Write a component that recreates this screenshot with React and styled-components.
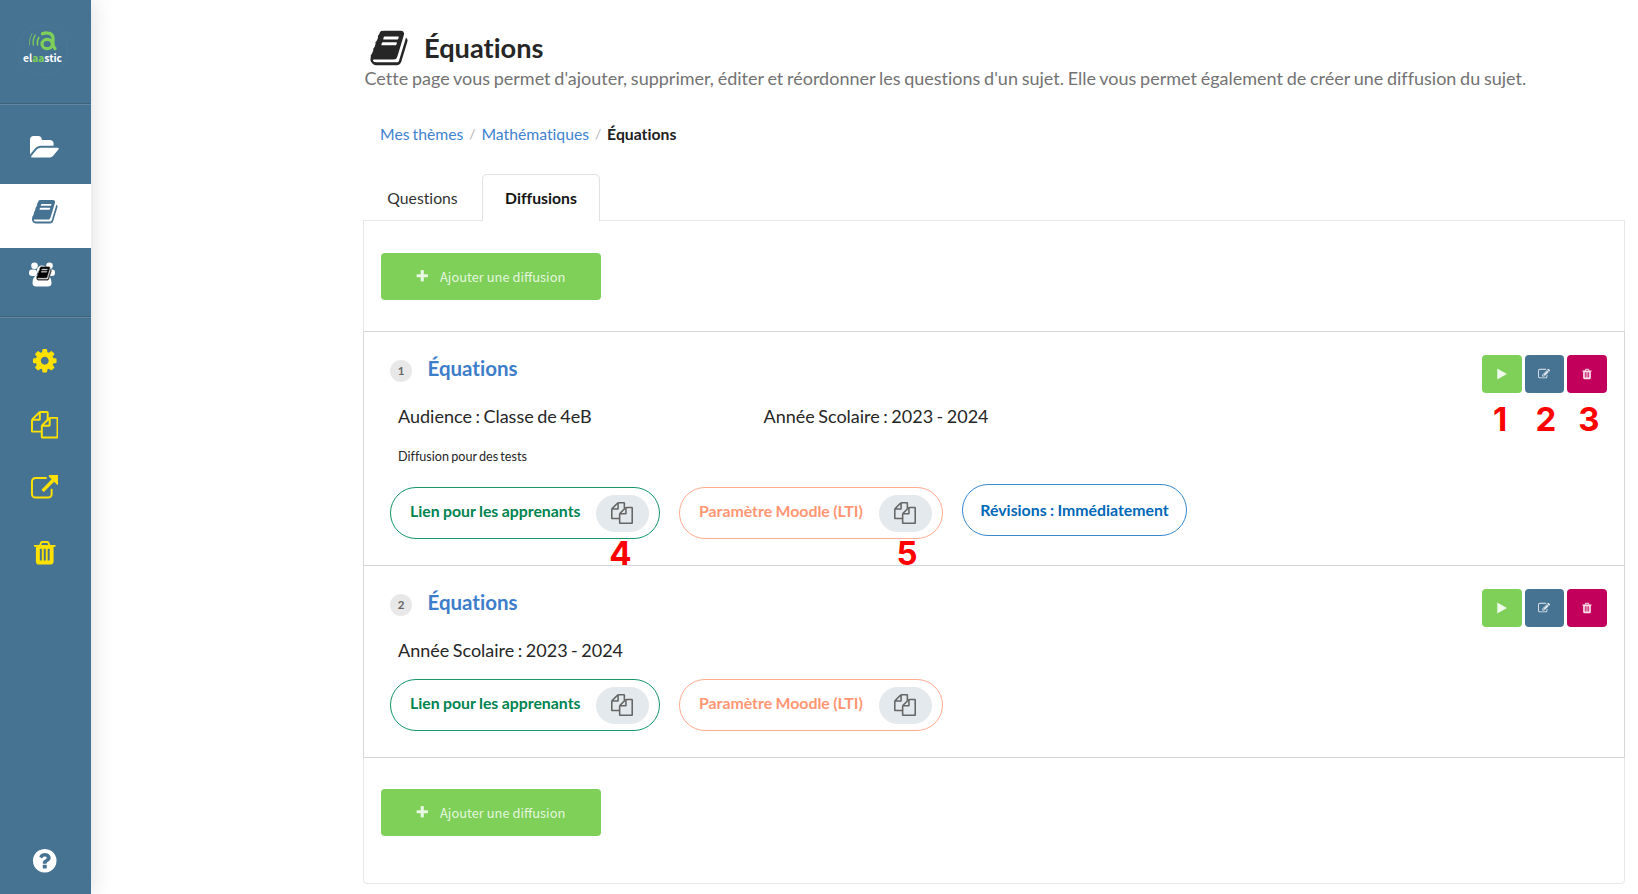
import React from "react";
import styled, { createGlobalStyle } from "styled-components";

const GlobalStyle = createGlobalStyle`
  *, *::before, *::after { box-sizing: border-box; }
  html, body { margin: 0; height: 100%; background: #fff; }
  body {
    font-family: Lato, "Liberation Sans", sans-serif;
    font-size: 16px;
    font-variant-ligatures: none;
    color: #262626;
    overflow: hidden;
  }
  h1, h2, p { margin: 0; }
`;

const paths = {
  book: "M1703 478q40 57 18 129l-275 906q-19 64-76.5 107.5t-122.5 43.5h-923q-77 0-148.5-53.5t-99.5-131.5q-24-67-2-127 0-4 3-27t4-37q1-8-3-21.5t-3-19.5q2-11 8-21t16.5-23.5 16.5-23.5q23-38 45-91.5t30-91.5q3-10 .5-30t-.5-28q3-11 17-28t17-23q21-36 42-92t25-90q1-9-2.5-32t.5-28q4-13 22-30.5t22-22.5q19-26 42.5-84.5t27.5-96.5q1-8-3-25.5t-2-26.5q2-8 9-18t18-23 17-21q8-12 16.5-30.5t15-35 16-36 19.5-32 26.5-23.5 36-11.5 47.5 5.5l-1 3q38-9 51-9h761q74 0 114 56t18 130l-274 906q-36 119-71.5 153.5t-128.5 34.5h-869q-27 0-38 15-11 16-1 43 24 70 144 70h923q29 0 56-15.5t35-41.5l300-987q7-22 5-57 38 15 59 43zm-1064 2q-4 13 2 22.5t20 9.5h608q13 0 25.5-9.5t16.5-22.5l21-64q4-13-2-22.5t-20-9.5h-608q-13 0-25.5 9.5t-16.5 22.5zm-83 256q-4 13 2 22.5t20 9.5h608q13 0 25.5-9.5t16.5-22.5l21-64q4-13-2-22.5t-20-9.5h-608q-13 0-25.5 9.5t-16.5 22.5z",
  cog: "M1152 896q0-106-75-181t-181-75-181 75-75 181 75 181 181 75 181-75 75-181zm512-109v222q0 12-8 23t-20 13l-185 28q-19 54-39 91 35 50 107 138 10 12 10 25t-9 23q-27 37-99 108t-94 71q-12 0-26-9l-138-108q-44 23-91 38-16 136-29 186-7 28-36 28h-222q-14 0-24.5-8.5t-11.5-21.5l-28-184q-49-16-90-37l-141 107q-10 9-25 9-14 0-25-11-126-114-165-168-7-10-7-23 0-12 8-23 15-21 51-66.5t54-70.5q-27-50-41-99l-183-27q-13-2-21-12.5t-8-23.5v-222q0-12 8-23t19-13l186-28q14-46 39-92-40-57-107-138-10-12-10-24 0-10 9-23 26-36 98.5-107.5t94.5-71.5q13 0 26 10l138 107q44-23 91-38 16-136 29-186 7-28 36-28h222q14 0 24.5 8.5t11.5 21.5l28 184q49 16 90 37l142-107q9-9 24-9 13 0 25 10 129 119 165 170 7 8 7 22 0 12-8 23-15 21-51 66.5t-54 70.5q26 50 41 98l183 28q13 2 21 12.5t8 23.5z",
  copy: "M1696 384q40 0 68 28t28 68v1216q0 40-28 68t-68 28h-960q-40 0-68-28t-28-68v-288h-544q-40 0-68-28t-28-68v-672q0-40 20-88t48-76l408-408q28-28 76-48t88-20h416q40 0 68 28t28 68v328q68-40 128-40h416zm-544 213l-299 299h299v-299zm-640-384l-299 299h299v-299zm196 647l316-316v-416h-384v416q0 40-28 68t-68 28h-416v640h512v-256q0-40 20-88t48-76zm956 804v-1152h-384v416q0 40-28 68t-68 28h-416v640h896z",
  external: "M1408 928v320q0 119-84.5 203.5t-203.5 84.5h-832q-119 0-203.5-84.5t-84.5-203.5v-832q0-119 84.5-203.5t203.5-84.5h704q14 0 23 9t9 23v64q0 14-9 23t-23 9h-704q-66 0-113 47t-47 113v832q0 66 47 113t113 47h832q66 0 113-47t47-113v-320q0-14 9-23t23-9h64q14 0 23 9t9 23zm384-864v512q0 26-19 45t-45 19-45-19l-176-176-652 652q-10 10-23 10t-23-10l-114-114q-10-10-10-23t10-23l652-652-176-176q-19-19-19-45t19-45 45-19h512q26 0 45 19t19 45z",
  trash: "M704 1376v-704q0-14-9-23t-23-9h-64q-14 0-23 9t-9 23v704q0 14 9 23t23 9h64q14 0 23-9t9-23zm256 0v-704q0-14-9-23t-23-9h-64q-14 0-23 9t-9 23v704q0 14 9 23t23 9h64q14 0 23-9t9-23zm256 0v-704q0-14-9-23t-23-9h-64q-14 0-23 9t-9 23v704q0 14 9 23t23 9h64q14 0 23-9t9-23zm-544-992h448l-48-117q-7-9-17-11h-317q-10 2-17 11zm928 32v64q0 14-9 23t-23 9h-96v948q0 83-47 143.500t-113 60.500h-832q-66 0-113-58.500t-47-141.500v-952h-96q-14 0-23-9t-9-23v-64q0-14 9-23t23-9h309l70-167q15-37 54-63t79-26h320q40 0 79 26t54 63l70 167h309q14 0 23 9t9 23z",
  edit: "M888 1184l116-116-152-152-116 116v56h96v96h56zm440-720q-16-16-33 1l-350 350q-17 17-1 33t33-1l350-350q17-17 1-33zm80 594v190q0 119-84.5 203.5t-203.5 84.5h-832q-119 0-203.5-84.5t-84.5-203.5v-832q0-119 84.5-203.5t203.5-84.5h832q63 0 117 25 15 7 18 23 3 17-9 29l-49 49q-14 14-32 8-23-6-45-6h-832q-66 0-113 47t-47 113v832q0 66 47 113t113 47h832q66 0 113-47t47-113v-126q0-13 9-22l64-64q15-15 35-7t20 29zm-96-738l288 288-672 672h-288v-288zm444 132l-92 92-288-288 92-92q28-28 68-28t68 28l152 152q28 28 28 68t-28 68z",
  folder: "M1879 952q0 31-31 66l-336 396q-43 51-120.5 86.5t-143.5 35.5h-1088q-34 0-60.5-13t-26.5-43q0-31 31-66l336-396q43-51 120.5-86.5t143.5-35.5h1088q34 0 60.5 13t26.5 43zm-343-344v160h-832q-94 0-197 47.5t-164 119.5l-337 396-5 6q0-4-.5-12.5t-.5-12.5v-960q0-92 66-158t158-66h320q92 0 158 66t66 158v32h544q92 0 158 66t66 158z",
  help: "M1024 1376v-192q0-14-9-23t-23-9h-192q-14 0-23 9t-9 23v192q0 14 9 23t23 9h192q14 0 23-9t9-23zm256-672q0-88-55.5-163t-138.5-116-170-41q-243 0-371 213-15 24 8 42l132 100q7 6 19 6 16 0 25-12 53-68 86-92 34-24 86-24 48 0 85.5 26t37.5 59q0 38-20 61t-68 45q-63 28-115.5 86.5t-52.5 125.5v36q0 14 9 23t23 9h192q14 0 23-9t9-23q0-19 21.5-49.5t54.5-49.5q32-18 49-28.5t46-35 44.5-48 28-60.5 12.5-81zm384 192q0 209-103 385.5t-279.5 279.5-385.5 103-385.5-103-279.5-279.5-103-385.5 103-385.5 279.5-279.5 385.5-103 385.5 103 279.5 279.5 103 385.5z",
  plus: "M1600 736v192q0 40-28 68t-68 28h-416v416q0 40-28 68t-68 28h-192q-40 0-68-28t-28-68v-416h-416q-40 0-68-28t-28-68v-192q0-40 28-68t68-28h416v-416q0-40 28-68t68-28h192q40 0 68 28t28 68v416h416q40 0 68 28t28 68z",
  play: "M1576 927l-1328 738q-23 13-39.5 3t-16.5-36v-1472q0-26 16.5-36t39.5 3l1328 738q23 13 23 31t-23 31z",
};

const Svg = styled.svg`
  display: block;
  flex: none;
  height: ${(p) => p.$size}px;
  width: ${(p) => (p.$size * p.$w) / 1792}px;
  fill: currentColor;
`;

function Icon({ name, size, w = 1792 }) {
  return (
    <Svg $size={size} $w={w} viewBox={`0 0 ${w} 1792`} aria-hidden="true">
      <path d={paths[name]} />
    </Svg>
  );
}

const Page = styled.div`
  display: flex;
  height: 894px;
`;

const Sidebar = styled.nav`
  display: flex;
  flex-direction: column;
  flex: none;
  width: 91px;
  background: #467392;
  box-shadow: 0 0 21px rgba(34, 36, 38, 0.17);
`;

const LogoBox = styled.div`
  height: 103px;
  padding: 24px 0 0 17px;
`;

const SideGroup = styled.div`
  padding-top: ${(p) => p.$top}px;
  height: ${(p) => p.$height}px;
  border-top: 1px solid rgba(34, 36, 38, 0.2);
  box-shadow: inset 0 1px 0 rgba(255, 255, 255, 0.14);
`;

const SideItem = styled.a`
  display: flex;
  align-items: center;
  justify-content: center;
  height: 64px;
  padding: 0 2px 8px 0;
  color: ${(p) => (p.$active ? "#467392" : p.$color || "#fff")};
  background: ${(p) => (p.$active ? "#fff" : "transparent")};
`;

const HelpItem = styled(SideItem)`
  margin-top: auto;
  padding-bottom: 2px;
`;

const GroupSvg = styled.svg`
  display: block;
  width: 27px;
  height: 25px;
  margin: -4px 4px 0 0;
`;

const Main = styled.main`
  width: 1262px;
  margin-left: 272px;
  padding-top: 27px;
`;

const PageTitle = styled.h1`
  display: flex;
  align-items: center;
  gap: 15px;
  height: 41px;
  padding-left: 6px;
  font-size: 27.2px;
  font-weight: 700;
  line-height: 41px;
`;

const Subtitle = styled.p`
  height: 23px;
  padding-left: 1.5px;
  font-size: 18px;
  line-height: 21px;
  word-spacing: -0.88px;
  color: #737373;
  white-space: nowrap;
`;

const Breadcrumb = styled.div`
  display: flex;
  height: 83px;
  padding: 31px 0 0 17px;
  font-size: 15.75px;
  line-height: 23px;
  word-spacing: -1px;
  color: #212121;

  a { color: #4183d0; }
  i { width: 18px; text-align: center; font-style: normal; color: #b5b5b5; font-size: 14px; }
`;

const Tabs = styled.div`
  display: flex;
  height: 47px;
  margin-bottom: -1px;
`;

const Tab = styled.a`
  display: flex;
  align-items: center;
  justify-content: center;
  width: ${(p) => p.$width}px;
  padding-bottom: 1px;
  font-size: 15.75px;
  font-weight: ${(p) => (p.$active ? 700 : 400)};
  color: ${(p) => (p.$active ? "#141414" : "#333")};
  border: 1px solid ${(p) => (p.$active ? "#e0e1e2" : "transparent")};
  border-bottom: 0;
  border-radius: 5px 5px 0 0;
  background: ${(p) => (p.$active ? "#fff" : "transparent")};
  z-index: 1;
`;

const Panel = styled.section`
  height: 664px;
  border: 1px solid #e6e7e8;
  border-radius: 0 0 4px 4px;
`;

const AddBar = styled.div`
  height: ${(p) => p.$height}px;
  padding: ${(p) => p.$top}px 0 0 16.5px;
`;

const AddButton = styled.button`
  display: flex;
  align-items: center;
  gap: 11px;
  width: 220px;
  height: 47px;
  padding: 0 0 0 34px;
  border: 0;
  border-radius: 4px;
  background: #7ed058;
  color: rgba(255, 255, 255, 0.82);
  font: 400 12.9px/20px "Noto Sans CJK SC", "Open Sans", sans-serif;
`;

const Row = styled.article`
  display: flex;
  justify-content: space-between;
  height: ${(p) => p.$height}px;
  margin: 0 -1px;
  padding: 22px 17px 0 26px;
  border: 1px solid #d6d7d8;
  border-bottom-width: ${(p) => (p.$last ? 1 : 0)}px;
`;

const RowHead = styled.div`
  display: flex;
  align-items: center;
  gap: 15.5px;
  height: 34px;
`;

const Rank = styled.span`
  display: flex;
  align-items: center;
  justify-content: center;
  width: 22px;
  height: 22px;
  margin-top: -1px;
  border-radius: 50%;
  background: #e8e8e8;
  color: #666;
  font-size: 11.5px;
  font-weight: 700;
`;

const RowTitle = styled.h2`
  font-size: 20.5px;
  line-height: 28px;
  margin-top: -6px;
  font-weight: 700;
  color: #3d7dca;
`;

const Info = styled.div`
  display: grid;
  grid-template-columns: 365.5px auto;
  height: 24px;
  margin-top: 16px;
  padding-left: 8px;
  font-size: 18px;
  line-height: 24px;
  word-spacing: -1.1px;
`;

const Note = styled.p`
  height: 20px;
  margin-top: 18px;
  padding-left: 8px;
  font-size: 12.6px;
  line-height: 21px;
  word-spacing: -1px;
`;

const Pills = styled.div`
  display: flex;
  gap: 19px;
  margin-top: ${(p) => p.$top}px;
`;

const Pill = styled.div`
  display: flex;
  align-items: center;
  justify-content: ${(p) => (p.$plain ? "center" : "space-between")};
  width: ${(p) => p.$width}px;
  height: 52px;
  margin-top: ${(p) => (p.$plain ? -3 : 0)}px;
  padding: 0 ${(p) => (p.$plain ? 0 : 10)}px 0 ${(p) => (p.$plain ? 0 : 19)}px;
  border: 1px solid ${(p) => p.$border};
  border-radius: 27px;
  color: ${(p) => p.$color};
  font-size: 15.85px;
  font-weight: 700;
  line-height: 20px;
  word-spacing: -0.5px;
  white-space: nowrap;

  & > span { margin-top: ${(p) => (p.$plain ? -1 : -5)}px; }
`;

const CopyButton = styled.button`
  display: flex;
  align-items: center;
  justify-content: center;
  width: 53px;
  height: 37px;
  padding: 0 2px 1px 0;
  border: 0;
  border-radius: 19px;
  background: #e3e9ec;
  color: #666;
`;

const Actions = styled.div`
  display: flex;
  gap: 3px;
  margin-top: 1px;
`;

const ActionButton = styled.button`
  display: flex;
  align-items: center;
  justify-content: center;
  width: 39.7px;
  height: 37.500px;
  padding: 0;
  border: 0;
  border-radius: 4px;
  background: ${(p) => p.$bg};
  color: rgba(255, 255, 255, 0.88);
`;

const Marker = styled.span`
  position: absolute;
  left: ${(p) => p.$x - 20}px;
  top: ${(p) => p.$y - 20}px;
  width: 40px;
  text-align: center;
  color: #f00;
  font: 700 33px/40px Inter, sans-serif;
  z-index: 2;
`;

const LogoText = styled.text`
  font-family: "Noto Sans CJK SC", "Open Sans", sans-serif;
  font-weight: 700;
`;

function Logo() {
  return (
    <svg width="52" height="52" viewBox="0 0 52 52" aria-label="elaastic">
      <circle cx="25.500" cy="26" r="25" fill="none" stroke="#4a7896" strokeWidth=".8" />
      <g fill="none" stroke="#7ed058" strokeLinecap="round">
        <path d="M15 9.500q-3.200 5-2.600 11.500" strokeWidth="1" opacity=".7" />
        <path d="M18.300 11q-2.800 4.500-2 10" strokeWidth="1.300" />
        <path d="M21.800 13.500q-2.200 3.500-1.300 7.500" strokeWidth="1.600" />
        <path d="M25.500 9.800q3-1.300 6-.6 4.500.8 4.500 5.300v4.500q0 3.500 2 5.500" strokeWidth="3.200" />
        <ellipse cx="30.200" cy="20" rx="5.200" ry="4.700" strokeWidth="3.200" />
      </g>
      <LogoText x="6" y="38" fontSize="10.500" textLength="39" lengthAdjust="spacingAndGlyphs" fill="#fff">
        el<tspan fill="#7ed058">aa</tspan>stic
      </LogoText>
    </svg>
  );
}

function GroupIcon() {
  return (
    <GroupSvg viewBox="0 0 27 25" aria-hidden="true">
      <g fill="#fff">
        <circle cx="5.500" cy="3.700" r="3.300" />
        <circle cx="20.500" cy="3.700" r="3.300" />
        <rect x="0" y="7.500" width="8" height="6.500" rx="3" />
        <rect x="18" y="7.500" width="8" height="6.500" rx="3" />
        <circle cx="13" cy="8.500" r="5" />
        <path d="M8.500 12.500h9q5 2 5 8.500 0 3.500-4 3.500h-11q-4 0-4-3.500 0-6.500 5-8.500z" />
      </g>
      <svg x="7" y="3.500" width="16" height="16" viewBox="0 0 1792 1792">
        <path d={paths.book} fill="#000" stroke="#777" strokeWidth="60" />
      </svg>
    </GroupSvg>
  );
}

function AddDiffusion({ height, top }) {
  return (
    <AddBar $height={height} $top={top}>
      <AddButton>
        <Icon name="plus" size={14.500} />
        <span>Ajouter une diffusion</span>
      </AddButton>
    </AddBar>
  );
}

function RowActions() {
  return (
    <Actions>
      <ActionButton $bg="#7ed058"><Icon name="play" size={12} w={1600} /></ActionButton>
      <ActionButton $bg="#467392"><Icon name="edit" size={12} /></ActionButton>
      <ActionButton $bg="#c2005b"><Icon name="trash" size={12} /></ActionButton>
    </Actions>
  );
}

function LinkPill({ label, width, color, border }) {
  return (
    <Pill $width={width} $color={color} $border={border}>
      <span>{label}</span>
      <CopyButton><Icon name="copy" size={22} /></CopyButton>
    </Pill>
  );
}

function Diffusion({ rank, height, infos, note, revisions, pillsTop, last }) {
  return (
    <Row $height={height} $last={last}>
      <div>
        <RowHead>
          <Rank>{rank}</Rank>
          <RowTitle>Équations</RowTitle>
        </RowHead>
        <Info>{infos.map((t) => <span key={t}>{t}</span>)}</Info>
        {note && <Note>{note}</Note>}
        <Pills $top={pillsTop}>
          <LinkPill label="Lien pour les apprenants" width={270} color="#008450" border="#159664" />
          <LinkPill label="Paramètre Moodle (LTI)" width={264} color="#ff9673" border="#ffac90" />
          {revisions && (
            <Pill $plain $width={225} $color="#0068b8" $border="#3888ca"><span>{revisions}</span></Pill>
          )}
        </Pills>
      </div>
      <RowActions />
    </Row>
  );
}

const markers = [
  ["1", 1500, 419],
  ["2", 1546, 419],
  ["3", 1589, 419],
  ["4", 620.5, 553],
  ["5", 907, 553],
];

export default function App() {
  return (
    <>
      <GlobalStyle />
      <Page>
        <Sidebar>
          <LogoBox><Logo /></LogoBox>
          <SideGroup $top={16} $height={213}>
            <SideItem><Icon name="folder" size={27.5} w={1920} /></SideItem>
            <SideItem $active><Icon name="book" size={27.5} /></SideItem>
            <SideItem><GroupIcon /></SideItem>
          </SideGroup>
          <SideGroup $top={16} $height={280}>
            {["cog", "copy", "external", "trash"].map((n) => (
              <SideItem key={n} $color="#ffe100"><Icon name={n} size={27.5} /></SideItem>
            ))}
          </SideGroup>
          <HelpItem><Icon name="help" size={27.5} /></HelpItem>
        </Sidebar>
        <Main>
          <PageTitle>
            <Icon name="book" size={40} />
            <span>Équations</span>
          </PageTitle>
          <Subtitle>
            Cette page vous permet d'ajouter, supprimer, éditer et réordonner les questions d'un sujet. Elle vous permet également de créer une diffusion du sujet.
          </Subtitle>
          <Breadcrumb>
            <a>Mes thèmes</a><i>/</i><a>Mathématiques</a><i>/</i><b>Équations</b>
          </Breadcrumb>
          <Tabs>
            <Tab $width={119}>Questions</Tab>
            <Tab $width={118} $active>Diffusions</Tab>
          </Tabs>
          <Panel>
            <AddDiffusion height={110} top={32} />
            <Diffusion
              rank={1}
              height={234}
              infos={["Audience : Classe de 4eB", "Année Scolaire : 2023 - 2024"]}
              note="Diffusion pour des tests"
              revisions="Révisions : Immédiatement"
              pillsTop={21}
            />
            <Diffusion
              rank={2}
              height={193}
              infos={["Année Scolaire : 2023 - 2024"]}
              pillsTop={17}
              last
            />
            <AddDiffusion height={124} top={31} />
          </Panel>
        </Main>
      </Page>
      {markers.map(([label, x, y]) => (
        <Marker key={label} $x={x} $y={y}>{label}</Marker>
      ))}
    </>
  );
}
